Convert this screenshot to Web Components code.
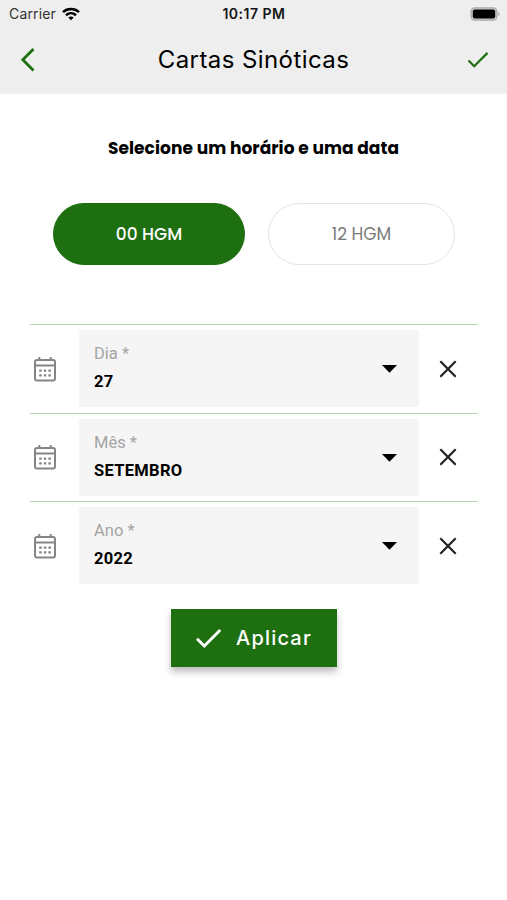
<!DOCTYPE html>
<html lang="pt">
<head>
<meta charset="utf-8">
<title>Cartas Sinóticas</title>
<style>
  body {
    margin: 0;
    background: #fff;
    color: #000;
    font-family: Inter, "Liberation Sans", sans-serif;
  }
</style>
</head>
<body>
<synoptic-page>
  <status-bar carrier="Carrier" time="10:17 PM"></status-bar>
  <nav-header>Cartas Sinóticas</nav-header>
  <page-prompt>Selecione um horário e uma data</page-prompt>
  <hour-picker>
    <hour-option selected>00 HGM</hour-option>
    <hour-option>12 HGM</hour-option>
  </hour-picker>
  <date-form>
    <date-field label="Dia *">27</date-field>
    <date-field label="Mês *">SETEMBRO</date-field>
    <date-field label="Ano *">2022</date-field>
  </date-form>
  <apply-button>Aplicar</apply-button>
</synoptic-page>

<script>
// Attach an open shadow root and fill it with the given markup
class BaseElement extends HTMLElement {
  connectedCallback() {
    if (this.shadowRoot) return;
    this.attachShadow({ mode: 'open' });
    this.shadowRoot.innerHTML = this.render();
  }
}

class SynopticPage extends BaseElement {
  render() {
    return `
      <style>
        :host {
          display: flex;
          flex-direction: column;
          height: 900px;
          overflow: hidden;
          background: #fff;
        }
      </style>
      <slot></slot>
    `;
  }
}
customElements.define('synoptic-page', SynopticPage);

class StatusBar extends BaseElement {
  render() {
    return `
      <style>
        :host {
          display: grid;
          grid-template-columns: 1fr auto 1fr;
          align-items: center;
          height: 27px;
          padding: 0 7px 0 9px;
          background: #eee;
        }
        .carrier {
          display: flex;
          align-items: center;
          gap: 6px;
          font-size: 14px;
          letter-spacing: 0.15px;
          color: #333;
        }
        .time {
          margin-right: 1px;
          font-size: 14px;
          font-weight: 600;
          letter-spacing: 0.5px;
          color: #151515;
        }
        .battery {
          justify-self: end;
        }
        svg {
          display: block;
        }
      </style>
      <div class="carrier">
        <span>${this.getAttribute('carrier')}</span>
        <svg width="18" height="14" viewBox="0 0 18 14" fill="none" stroke="#000" stroke-width="2.5">
          <path d="M1 5.1C5.4.9 12.6.9 17 5.1"/>
          <path d="M4 8.300c2.900-2.600 7.100-2.600 10 0"/>
          <path d="M6.300 10.600c1.600-1.400 3.800-1.400 5.400 0L9 13.300z" fill="#000" stroke="none"/>
        </svg>
      </div>
      <div class="time">${this.getAttribute('time')}</div>
      <svg class="battery" width="30" height="14" viewBox="0 0 30 14">
        <rect x="1" y=".8" width="26" height="12.400" rx="3.800" fill="#c9c9c9" stroke="#aaa" stroke-width="1.300"/>
        <rect x="2.800" y="2.600" width="22.400" height="8.800" rx="2" fill="#000"/>
        <path d="M28.400 5v4c1.700-.7 1.700-3.300 0-4z" fill="#aaa"/>
      </svg>
    `;
  }
}
customElements.define('status-bar', StatusBar);

class NavHeader extends BaseElement {
  render() {
    return `
      <style>
        :host {
          display: grid;
          grid-template-columns: 1fr auto 1fr;
          align-items: center;
          height: 67px;
          padding: 0 18px 2px 20px;
          box-sizing: border-box;
          background: #eee;
        }
        h1 {
          margin: 0 2px 0 0;
          font-size: 24px;
          line-height: 65px;
          font-weight: 400;
          letter-spacing: 0.42px;
        }
        .done {
          justify-self: end;
        }
        svg {
          display: block;
          fill: none;
          stroke: #1e6f10;
        }
      </style>
      <svg width="16" height="26" viewBox="0 0 16 26" stroke-width="2.8"><path d="M13.500 2L2.800 12.800l10.700 10.800"/></svg>
      <h1><slot></slot></h1>
      <svg class="done" width="22" height="18" viewBox="0 0 22 18" stroke-width="2.200"><path d="M1.500 9.500l5.700 5.700L20.500 1.900"/></svg>
    `;
  }
}
customElements.define('nav-header', NavHeader);

class PagePrompt extends BaseElement {
  render() {
    return `
      <style>
        :host {
          display: block;
          padding-top: 41px;
          text-align: center;
          white-space: nowrap;
          font-family: Poppins, Inter, sans-serif;
          font-size: 17px;
          line-height: 26px;
          font-weight: 700;
          letter-spacing: 0.06px;
        }
      </style>
      <slot></slot>
    `;
  }
}
customElements.define('page-prompt', PagePrompt);

class HourPicker extends BaseElement {
  render() {
    return `
      <style>
        :host {
          display: grid;
          grid-template-columns: 192px 187px;
          gap: 23px;
          height: 62px;
          margin: 42px 0 0 53px;
        }
      </style>
      <slot></slot>
    `;
  }
}
customElements.define('hour-picker', HourPicker);

class HourOption extends BaseElement {
  render() {
    return `
      <style>
        :host {
          display: flex;
          align-items: center;
          justify-content: center;
          box-sizing: border-box;
          padding-bottom: 1px;
          border: 1.5px solid #e4e4e4;
          border-radius: 31px;
          color: #7c7c7c;
          font-family: Poppins, Inter, sans-serif;
          font-size: 17px;
          font-weight: 400;
        }
        :host([selected]) {
          border-color: #1e6f10;
          background: #1e6f10;
          color: #fff;
          font-weight: 500;
        }
      </style>
      <slot></slot>
    `;
  }
}
customElements.define('hour-option', HourOption);

class DateForm extends BaseElement {
  render() {
    return `
      <style>
        :host {
          display: block;
          margin: 59px 29px 0 30px;
        }
      </style>
      <slot></slot>
    `;
  }
}
customElements.define('date-form', DateForm);

class DateField extends BaseElement {
  render() {
    return `
      <style>
        :host {
          display: grid;
          grid-template-columns: 49px 340px 1fr;
          height: 88.6px;
          box-sizing: border-box;
          padding-top: 5px;
          border-top: 1px solid #b5d4b1;
          font-family: Roboto, sans-serif;
        }
        .calendar {
          margin: 25.5px 0 0 3px;
        }
        .select {
          display: flex;
          align-items: center;
          justify-content: space-between;
          height: 77px;
          box-sizing: border-box;
          padding: 0 21px 0 15px;
          border-radius: 3px;
          background: #f5f5f5;
        }
        .text {
          padding-bottom: 1px;
        }
        .label {
          font-size: 16.5px;
          line-height: 28px;
          color: #a4a4a4;
        }
        .value {
          font-size: 16.5px;
          line-height: 28px;
          font-weight: 700;
          letter-spacing: 0.3px;
        }
        .clear {
          margin: 29.9px 0 0 20px;
        }
        svg {
          display: block;
        }
      </style>
      <svg class="calendar" width="24" height="26" viewBox="0 0 24 26" fill="none" stroke="#858585" stroke-width="2">
        <rect x="2" y="4" width="20" height="20.500" rx="2"/>
        <path d="M2 9.500h20M6.300 1v3M17.700 1v3"/>
        <path d="M6.200 14.600h2.500M10.800 14.600h2.500M15.400 14.600h2.500M6.200 19.400h2.500M10.800 19.400h2.500M15.400 19.400h2.500" stroke-width="2.300"/>
      </svg>
      <div class="select">
        <div class="text">
          <div class="label">${this.getAttribute('label')}</div>
          <div class="value"><slot></slot></div>
        </div>
        <svg width="17" height="9" viewBox="0 0 17 9"><path d="M1 1h15L8.500 8.800z"/></svg>
      </div>
      <svg class="clear" width="18" height="18" viewBox="0 0 18 18" fill="none" stroke="#222" stroke-width="2.200">
        <path d="M1.300 1.300l15.400 15.400M16.700 1.300l-15.400 15.400"/>
      </svg>
    `;
  }
}
customElements.define('date-field', DateField);

class ApplyButton extends BaseElement {
  render() {
    return `
      <style>
        :host {
          display: flex;
          align-items: center;
          align-self: flex-start;
          gap: 14px;
          width: 166px;
          height: 58px;
          box-sizing: border-box;
          margin: 19px 0 0 171px;
          padding-left: 24px;
          background: #1e6f10;
          box-shadow: 0 5px 7px rgba(0, 0, 0, 0.26);
          color: #fff;
          font-size: 20px;
          font-weight: 500;
          letter-spacing: 1.2px;
        }
      </style>
      <svg width="27" height="20" viewBox="0 0 27 20" fill="none" stroke="#fff" stroke-width="2.900"><path d="M2 10.800l7.300 7.200L25.200 2"/></svg>
      <span><slot></slot></span>
    `;
  }
}
customElements.define('apply-button', ApplyButton);
</script>
</body>
</html>
